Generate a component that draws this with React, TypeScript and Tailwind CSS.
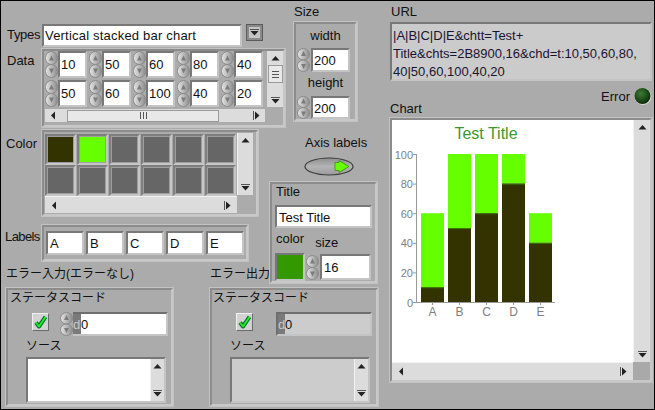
import React from 'react';

const DARK = '#333300';
const LIME = '#66ff00';

// shared bevel styles
const sunken = 'border-2 border-t-[#787878] border-l-[#787878] border-r-[#c4c4c4] border-b-[#c4c4c4]';
const frame = 'border-2 border-t-[#8c8c8c] border-l-[#8c8c8c] border-r-[#c8c8c8] border-b-[#c8c8c8] shadow-[0_0_0_1px_#c2c2c2]';

function Spin({ h = 27 }: { h?: number }) {
    const half = h / 2;
    return (
        <svg width="13" height={h} className="block shrink-0">
            <defs>
                <linearGradient id="spg" x1="0" x2="1" y1="0" y2="0">
                    <stop offset="0" stopColor="#e6e6e6" />
                    <stop offset="1" stopColor="#8c8c8c" />
                </linearGradient>
            </defs>
            <rect x="0.5" y="0.5" width="12" height={half - 0.5} rx="6" fill="url(#spg)" stroke="#8a8a8a" />
            <rect x="0.5" y={half} width="12" height={half - 0.5} rx="6" fill="url(#spg)" stroke="#8a8a8a" />
            <path d={`M4 ${half - 4} L6.5 ${half - 9} L9 ${half - 4}Z`} fill="#7c7c7c" />
            <path d={`M4 ${half + 4} L9 ${half + 4} L6.5 ${half + 9}Z`} fill="#7c7c7c" />
        </svg>
    );
}

function ArrowUp() {
    return (
        <svg width="9" height="6" className="block">
            <path d="M0.5 5.5h8L4.5 1z" fill="#222" />
        </svg>
    );
}
function ArrowDown() {
    return (
        <svg width="9" height="7" className="block">
            <rect x="0" y="0" width="9" height="1" fill="#555" />
            <path d="M0.5 2h8L4.5 6.5z" fill="#222" />
        </svg>
    );
}
function ArrowLeft() {
    return (
        <svg width="6" height="9" className="block">
            <path d="M5 0.5v8L1 4.5z" fill="#222" />
        </svg>
    );
}
function ArrowRight() {
    return (
        <svg width="7" height="9" className="block">
            <rect x="0" y="0" width="1" height="9" fill="#555" />
            <path d="M2 0.5v8L6.5 4.5z" fill="#222" />
        </svg>
    );
}

function VScroll({ className = '' }: { className?: string }) {
    return (
        <div className={`flex flex-col items-center justify-between bg-[#dcdcdc] border-l border-[#f2f2f2] py-[4px] ${className}`}>
            <ArrowUp />
            <ArrowDown />
        </div>
    );
}

function HScroll({ className = '' }: { className?: string }) {
    return (
        <div className={`flex items-center justify-between bg-[#dcdcdc] border-t border-[#f2f2f2] px-[6px] ${className}`}>
            <ArrowLeft />
            <ArrowRight />
        </div>
    );
}

function CheckBox() {
    return (
        <div className="w-[17px] h-[18px] bg-[#d2d2d2] border border-t-[#f0f0f0] border-l-[#f0f0f0] border-r-[#6a6a6a] border-b-[#6a6a6a] flex items-center justify-center">
            <svg width="13" height="14">
                <path d="M2 7.5 L5 11.5 L11.5 2" fill="none" stroke="#063" strokeWidth="4" strokeLinejoin="round" />
                <path d="M2 7.5 L5 11.5 L11.5 2" fill="none" stroke="#22ee22" strokeWidth="2" strokeLinejoin="round" />
            </svg>
        </div>
    );
}

function Cell({ v }: { v: number }) {
    return (
        <div className="flex mr-[2px]">
            <Spin />
            <div className={`${sunken} w-[29px] h-[27px] bg-white pl-[1px] pt-[5px]`}>{v}</div>
        </div>
    );
}

function BarChart() {
    const s1 = [10, 50, 60, 80, 40];
    const s2 = [50, 50, 40, 20, 20];
    const k = 1.48;
    const base = 182;
    return (
        <svg width="241" height="242" className="block">
            <text x="94" y="19" textAnchor="middle" fontSize="16" fill="#3c982c" fontFamily="Liberation Sans, sans-serif">
                Test Title
            </text>
            {[0, 20, 40, 60, 80, 100].map(t => {
                const y = base - t * k;
                return (
                    <g key={t}>
                        <line x1="21" x2="24" y1={y + 0.5} y2={y + 0.5} stroke="#999" />
                        <text x="21" y={y + 4.5} textAnchor="end" fontSize="11" fill="#808080" fontFamily="Liberation Sans, sans-serif">
                            {t}
                        </text>
                    </g>
                );
            })}
            {s1.map((v, i) => {
                const x = 29 + i * 27;
                const h1 = v * k;
                const h2 = s2[i] * k;
                return (
                    <g key={i}>
                        <rect x={x} y={base - h1 - h2} width="23" height={h2} fill={LIME} />
                        <rect x={x} y={base - h1} width="23" height={h1} fill={DARK} />
                        <line x1={x} x2={x + 23} y1={base - h1 + 0.5} y2={base - h1 + 0.5} stroke="#3a7a00" />
                        <line x1={x + 11.5} x2={x + 11.5} y1={base} y2={base + 3} stroke="#999" />
                        <text x={x + 11.5} y="196" textAnchor="middle" fontSize="12" fill="#808080" fontFamily="Liberation Sans, sans-serif">
                            {'ABCDE'[i]}
                        </text>
                    </g>
                );
            })}
            <line x1="24.5" x2="24.5" y1="34" y2={base} stroke="#999" />
            <line x1="24" x2="163" y1={base + 0.5} y2={base + 0.5} stroke="#999" />
        </svg>
    );
}

export default function App() {
    const row1 = [10, 50, 60, 80, 40];
    const row2 = [50, 60, 100, 40, 20];
    const swatches = [DARK, LIME, '#666666', '#666666', '#666666', '#666666', '#666666', '#666666', '#666666', '#666666', '#666666', '#666666'];

    return (
        <div className="w-[655px] h-[410px] overflow-hidden bg-[#ababab] border border-black flex items-start font-['Liberation_Sans','Noto_Sans_CJK_JP',sans-serif] text-[13px] leading-none text-[#111]">
            {/* Left column: inputs */}
            <div className="w-[268px] shrink-0 flex flex-col">
                {/* Types */}
                <div className="mt-[23px] flex items-start h-[23px]">
                    <span className="w-[41px] shrink-0 pl-[6px] pt-[4px] whitespace-nowrap tracking-[-0.3px]">Types</span>
                    <div className={`${sunken} w-[200px] h-[23px] bg-white pl-[1px] pt-[3px] whitespace-nowrap tracking-[0.2px]`}>Vertical stacked bar chart</div>
                    <div className="ml-[4px] w-[17px] h-[17px] bg-[#8a8a8a] border border-[#5a5a5a] flex items-center justify-center">
                        <div className="w-[11px] h-[11px] bg-[#c4c4c4] flex items-center justify-center">
                            <ArrowDown />
                        </div>
                    </div>
                </div>

                {/* Data */}
                <div className="mt-[2px] flex items-start">
                    <span className="w-[41px] shrink-0 pl-[6px] pt-[5px]">Data</span>
                    <div className={`${frame} w-[243px] h-[78px] shrink-0 flex flex-col`}>
                        <div className="flex">
                            <div className="w-[222px] pl-[1px] flex flex-col gap-[2px]">
                                <div className="flex">{row1.map((v, i) => <Cell key={i} v={v} />)}</div>
                                <div className="flex">{row2.map((v, i) => <Cell key={i} v={v} />)}</div>
                            </div>
                            <div className="ml-[1px] w-[16px] h-[56px] bg-[#dcdcdc] flex flex-col items-center pt-[4px]">
                                <ArrowUp />
                                <div className="mt-[4px] w-[15px] h-[18px] bg-[#e8e8e8] border border-[#9a9a9a] flex flex-col items-center justify-center gap-[2px]">
                                    <div className="w-[7px] h-px bg-[#555]" />
                                    <div className="w-[7px] h-px bg-[#555]" />
                                    <div className="w-[7px] h-px bg-[#555]" />
                                </div>
                                <div className="flex-1" />
                                <div className="pb-[3px]"><ArrowDown /></div>
                            </div>
                        </div>
                        <div className="mt-[2px] ml-[1px] w-[220px] h-[13px] bg-[#dcdcdc] flex items-center px-[5px]">
                            <ArrowLeft />
                            <div className="ml-[11px] w-[152px] h-[12px] bg-[#e8e8e8] border border-[#9a9a9a] flex items-center justify-center gap-[2px]">
                                <div className="w-px h-[7px] bg-[#555]" />
                                <div className="w-px h-[7px] bg-[#555]" />
                                <div className="w-px h-[7px] bg-[#555]" />
                            </div>
                            <div className="flex-1" />
                            <ArrowRight />
                        </div>
                    </div>
                </div>

                {/* Color */}
                <div className="mt-[3px] flex items-start">
                    <span className="w-[41px] shrink-0 pl-[5px] pt-[7px]">Color</span>
                    <div className={`${frame} w-[216px] h-[86px] shrink-0 flex flex-col`}>
                        <div className="flex">
                            <div className="pl-[1px] pt-[2px] grid grid-cols-[repeat(6,31px)] gap-x-[1px]">
                                {swatches.map((c, i) => (
                                    <div key={i} className="w-[31px] h-[31px] border-2 border-t-[#7e7e7e] border-l-[#7e7e7e] border-r-[#c6c6c6] border-b-[#c6c6c6] bg-[#9e9e9e] p-px">
                                        <div className="w-[25px] h-[25px]" style={{ backgroundColor: c }} />
                                    </div>
                                ))}
                            </div>
                            <VScroll className="ml-[1px] mt-px w-[16px] h-[62px]" />
                        </div>
                        <HScroll className="ml-[1px] w-[192px] h-[17px]" />
                    </div>
                </div>

                {/* Labels */}
                <div className="mt-[9px] flex items-start">
                    <span className="w-[41px] shrink-0 pl-[4px] pt-[5px] tracking-[-0.6px]">Labels</span>
                    <div className={`${frame} w-[206px] h-[36px] shrink-0 flex gap-[2px] pl-[2px] pt-[4px]`}>
                        {['A', 'B', 'C', 'D', 'E'].map(l => (
                            <div key={l} className={`${sunken} w-[38px] h-[24px] bg-white pl-[2px] pt-[4px]`}>{l}</div>
                        ))}
                    </div>
                </div>

                {/* Error clusters */}
                <div className="mt-[7px] flex items-start text-[12px]">
                    <div className="ml-[5px] w-[167px] shrink-0">
                        <div className="h-[20px] whitespace-nowrap">エラー入力(エラーなし)</div>
                        <div className={`${frame} h-[118px] flex flex-col`}>
                            <div className="pl-[2px] pt-[2px] whitespace-nowrap">ステータスコード</div>
                            <div className="mt-[8px] flex items-start">
                                <div className="ml-[24px] mt-px"><CheckBox /></div>
                                <div className="ml-[11px]"><Spin h={24} /></div>
                                <div className="w-[95px] h-[24px] flex border-t-2 border-r-2 border-b-2 border-t-[#6e6e6e] border-r-[#c4c4c4] border-b-[#c4c4c4]">
                                    <span className="w-[8px] bg-[#7a7a7a] text-[#c8c8c8] pt-[4px] text-[13px]">d</span>
                                    <span className="flex-1 bg-white pt-[4px] text-[13px]">0</span>
                                </div>
                            </div>
                            <div className="mt-[4px] pl-[18px] whitespace-nowrap">ソース</div>
                            <div className={`${sunken} mt-[5px] ml-[18px] w-[140px] h-[46px] bg-white flex justify-end`}>
                                <VScroll className="w-[14px] h-full" />
                            </div>
                        </div>
                    </div>
                    <div className="ml-[37px] w-[168px] shrink-0">
                        <div className="h-[20px] whitespace-nowrap">エラー出力</div>
                        <div className={`${frame} h-[118px] flex flex-col`}>
                            <div className="pl-px pt-[2px] whitespace-nowrap">ステータスコード</div>
                            <div className="mt-[8px] flex items-start">
                                <div className="ml-[24px] mt-px"><CheckBox /></div>
                                <div className="ml-[23px] w-[96px] h-[24px] flex border-2 border-t-[#6e6e6e] border-l-[#6e6e6e] border-r-[#c4c4c4] border-b-[#c4c4c4]">
                                    <span className="w-[7px] bg-[#7a7a7a] text-[#c8c8c8] pt-[4px] text-[13px]">d</span>
                                    <span className="flex-1 bg-[#cccccc] pt-[4px] text-[13px]">0</span>
                                </div>
                            </div>
                            <div className="mt-[4px] pl-[18px] whitespace-nowrap">ソース</div>
                            <div className={`${sunken} mt-[5px] ml-[18px] w-[140px] h-[46px] bg-[#cccccc] flex justify-end`}>
                                <VScroll className="w-[14px] h-full" />
                            </div>
                        </div>
                    </div>
                </div>
            </div>

            {/* Middle column: size, axis switch, title */}
            <div className="w-[116px] shrink-0 flex flex-col">
                <div className="mt-[4px] ml-[25px] h-[17px]">Size</div>
                <div className={`${frame} ml-[25px] w-[63px] h-[99px] flex flex-col`}>
                    <div className="pt-[5px] text-center">width</div>
                    <div className="mt-[6px] ml-px flex">
                        <Spin h={24} />
                        <div className={`${sunken} ml-px w-[39px] h-[24px] bg-white pl-[1px] pt-[4px]`}>200</div>
                    </div>
                    <div className="mt-[4px] text-center">height</div>
                    <div className="mt-[7px] ml-px flex">
                        <Spin h={23} />
                        <div className={`${sunken} ml-px w-[39px] h-[23px] bg-white pl-[1px] pt-[4px]`}>200</div>
                    </div>
                </div>

                <div className="mt-[15px] ml-[36px] whitespace-nowrap">Axis labels</div>
                <div className="mt-[8px] ml-[35px]">
                    <svg width="50" height="19" className="block">
                        <defs>
                            <linearGradient id="swg" x1="0" x2="0" y1="0" y2="1">
                                <stop offset="0" stopColor="#8e8e8e" />
                                <stop offset="0.5" stopColor="#b4b4b4" />
                                <stop offset="1" stopColor="#9a9a9a" />
                            </linearGradient>
                        </defs>
                        <ellipse cx="25" cy="9.5" rx="24" ry="8.5" fill="url(#swg)" stroke="#3c3c3c" strokeWidth="1.2" />
                        <path d="M31 5.5 L35 5.5 L35 3.5 L45 9.5 L35 15.5 L35 13.5 L31 13.5 Z" fill={LIME} stroke="#3a8a10" strokeWidth="0.8" />
                    </svg>
                </div>

                <div className={`${frame} mt-[6px] ml-px w-[107px] h-[101px] flex flex-col`}>
                    <div className="pl-[4px] pt-px">Title</div>
                    <div className={`${sunken} mt-[7px] ml-[3px] w-[97px] h-[24px] bg-white pl-[2px] pt-[4px]`}>Test Title</div>
                    <div className="mt-[3px] flex items-start">
                        <span className="pl-[4px] pt-px">color</span>
                        <span className="ml-[11px] pt-[5px]">size</span>
                    </div>
                    <div className="mt-[4px] ml-[3px] flex items-start">
                        <div className="w-[30px] h-[28px] border-2 border-t-[#777] border-l-[#777] border-r-[#c4c4c4] border-b-[#c4c4c4] bg-[#339900]" />
                        <div className="ml-px mt-[2px]"><Spin h={25} /></div>
                        <div className={`${sunken} ml-px mt-px w-[51px] h-[26px] bg-white pl-[2px] pt-[5px]`}>16</div>
                    </div>
                </div>
            </div>

            {/* Right column: url, error, chart */}
            <div className="w-[269px] shrink-0 flex flex-col">
                <div className="mt-[4px] ml-[6px] h-[17px]">URL</div>
                <div className={`${sunken} ml-[5px] w-[262px] h-[59px] bg-[#cbcbcb] pl-[1px] pt-[3px] leading-[18px] text-[#1a1430]`}>
                    <div>|A|B|C|D|E&amp;chtt=Test+</div>
                    <div className="whitespace-nowrap">Title&amp;chts=2B8900,16&amp;chd=t:10,50,60,80,</div>
                    <div>40|50,60,100,40,20</div>
                </div>
                <div className="h-[37px] flex justify-between">
                    <span className="self-end ml-[5px] pb-[3px]">Chart</span>
                    <div className="self-start mt-[6px] mr-[2px] flex items-center gap-[4px]">
                        <span>Error</span>
                        <svg width="18" height="19" className="block">
                            <defs>
                                <radialGradient id="led" cx="0.4" cy="0.35" r="0.7">
                                    <stop offset="0" stopColor="#3f7a35" />
                                    <stop offset="0.6" stopColor="#1c4a18" />
                                    <stop offset="1" stopColor="#0c250a" />
                                </radialGradient>
                            </defs>
                            <circle cx="9" cy="9.5" r="8.5" fill="#d8d8d8" />
                            <circle cx="8.5" cy="9" r="8" fill="url(#led)" />
                        </svg>
                    </div>
                </div>
                <div className={`${frame} ml-[5px] w-[262px] h-[264px] flex flex-col`}>
                    <div className="flex">
                        <div className="w-[241px] h-[242px] bg-white">
                            <BarChart />
                        </div>
                        <VScroll className="w-[17px] h-[242px]" />
                    </div>
                    <div className="flex">
                        <HScroll className="w-[241px] h-[18px]" />
                        <div className="w-[17px] h-[18px] bg-[#a9a9a9]" />
                    </div>
                </div>
            </div>
        </div>
    );
}
